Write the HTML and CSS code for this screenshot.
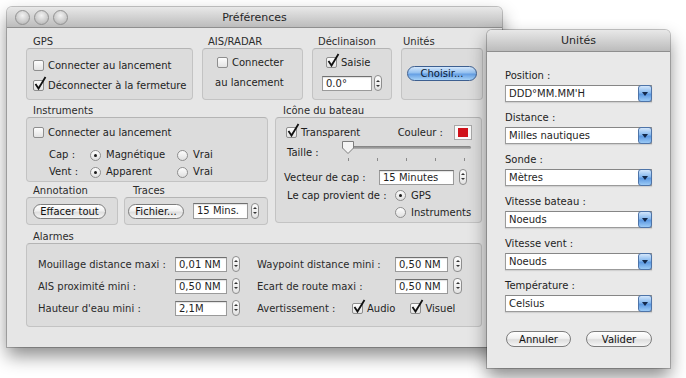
FILE: index.html
```html
<!DOCTYPE html>
<html lang="fr">
<head>
  <meta charset="UTF-8" />
  <title>Préférences</title>
  <link rel="stylesheet" href="styles.css">
</head>
<body>
<div class="desktop">

  <!-- fenêtre principale -->
  <div class="window prefs">
    <div class="titlebar">
      <div class="lights"><span></span><span></span><span></span></div>
      <div class="title">Préférences</div>
    </div>

    <div class="prefs-body">
      <div class="row-top">
        <section>
          <div class="legend">GPS</div>
          <div class="box box-gps">
            <div class="check"><span class="cb"></span>Connecter au lancement</div>
            <div class="check"><span class="cb on"><svg width="14" height="15" viewBox="0 0 14 15"><path d="M2.5 8 L5.5 12.5 L12.5 1" fill="none" stroke="#111" stroke-width="1.8"/></svg></span>Déconnecter à la fermeture</div>
          </div>
        </section>
        <section>
          <div class="legend legend-ais">AIS/RADAR</div>
          <div class="box box-ais">
            <div class="check"><span class="cb"></span>Connecter</div>
            <div class="wrapped">au lancement</div>
          </div>
        </section>
        <section>
          <div class="legend legend-ais">Déclinaison</div>
          <div class="box box-decl">
            <div class="check"><span class="cb on"><svg width="14" height="15" viewBox="0 0 14 15"><path d="M2.5 8 L5.5 12.5 L12.5 1" fill="none" stroke="#111" stroke-width="1.8"/></svg></span>Saisie</div>
            <div class="decl-row">
              <div class="field field-decl">0.0°</div>
              <div class="stepper"></div>
            </div>
          </div>
        </section>
        <section>
          <div class="legend legend-units">Unités</div>
          <div class="box box-units">
            <div class="btn blue btn-choisir">Choisir...</div>
          </div>
        </section>
      </div>

      <div class="row-mid">
        <div class="col-left">
          <section>
            <div class="legend">Instruments</div>
            <div class="box box-inst">
              <div class="check"><span class="cb"></span>Connecter au lancement</div>
              <div class="inst-grid">
                <span>Cap :</span>
                <div class="radio"><span class="rb on"></span>Magnétique</div>
                <div class="radio"><span class="rb"></span>Vrai</div>
                <span>Vent :</span>
                <div class="radio"><span class="rb on"></span>Apparent</div>
                <div class="radio"><span class="rb"></span>Vrai</div>
              </div>
            </div>
          </section>
          <div class="row-small">
            <section>
              <div class="legend">Annotation</div>
              <div class="box box-annot">
                <div class="btn btn-effacer">Effacer tout</div>
              </div>
            </section>
            <section>
              <div class="legend legend-traces">Traces</div>
              <div class="box box-traces">
                <div class="btn btn-fichier">Fichier...</div>
                <div class="field field-traces">15 Mins.</div>
                <div class="stepper"></div>
              </div>
            </section>
          </div>
        </div>

        <section>
          <div class="legend legend-boat">Icône du bateau</div>
          <div class="box box-boat">
            <div class="boat-row boat-first">
              <div class="check"><span class="cb on"><svg width="14" height="15" viewBox="0 0 14 15"><path d="M2.5 8 L5.5 12.5 L12.5 1" fill="none" stroke="#111" stroke-width="1.8"/></svg></span>Transparent</div>
              <div class="colour">Couleur :<span class="swatch"><i></i></span></div>
            </div>
            <div class="boat-row boat-size">
              <span class="size-label">Taille :</span>
              <div class="slider">
                <div class="track"></div>
                <svg class="knob" width="14" height="15" viewBox="0 0 14 15"><path d="M1.5 1.5 H12.5 V8 L7 13.5 L1.5 8 Z" fill="#f4f4f4" stroke="#7d7d7d"/></svg>
                <div class="ticks"><i></i><i></i><i></i><i></i><i></i></div>
              </div>
            </div>
            <div class="boat-row boat-vect">
              <span class="vect-label">Vecteur de cap :</span>
              <div class="field field-vect">15 Minutes</div>
              <div class="stepper"></div>
            </div>
            <div class="boat-row boat-src">
              <span class="src-label">Le cap provient de :</span>
              <div class="radio"><span class="rb on"></span>GPS</div>
            </div>
            <div class="boat-row boat-src2">
              <div class="radio"><span class="rb"></span>Instruments</div>
            </div>
          </div>
        </section>
      </div>

      <section class="alarms">
        <div class="legend">Alarmes</div>
        <div class="box box-alarm">
          <div class="alarm-col">
            <div class="alarm-row"><span class="alabel">Mouillage distance maxi :</span><div class="field field-al">0,01 NM</div><div class="stepper"></div></div>
            <div class="alarm-row"><span class="alabel">AIS proximité mini :</span><div class="field field-al">0,50 NM</div><div class="stepper"></div></div>
            <div class="alarm-row"><span class="alabel">Hauteur d'eau mini :</span><div class="field field-al">2,1M</div><div class="stepper"></div></div>
          </div>
          <div class="alarm-col alarm-right">
            <div class="alarm-row"><span class="alabel">Waypoint distance mini :</span><div class="field field-al">0,50 NM</div><div class="stepper"></div></div>
            <div class="alarm-row"><span class="alabel">Ecart de route maxi :</span><div class="field field-al">0,50 NM</div><div class="stepper"></div></div>
            <div class="alarm-row">
              <span class="alabel warn-label">Avertissement :</span>
              <div class="check"><span class="cb on"><svg width="14" height="15" viewBox="0 0 14 15"><path d="M2.5 8 L5.5 12.5 L12.5 1" fill="none" stroke="#111" stroke-width="1.8"/></svg></span>Audio</div>
              <div class="check check-visuel"><span class="cb on"><svg width="14" height="15" viewBox="0 0 14 15"><path d="M2.5 8 L5.5 12.5 L12.5 1" fill="none" stroke="#111" stroke-width="1.8"/></svg></span>Visuel</div>
            </div>
          </div>
        </div>
      </section>
    </div>
  </div>

  <!-- panneau des unités -->
  <div class="window units">
    <div class="titlebar">
      <div class="title">Unités</div>
    </div>
    <div class="units-body">
      <div class="ufield">
        <div class="ulabel">Position :</div>
        <div class="select"><span>DDD°MM.MM'H</span><i class="arrow"></i></div>
      </div>
      <div class="ufield">
        <div class="ulabel">Distance :</div>
        <div class="select"><span>Milles nautiques</span><i class="arrow"></i></div>
      </div>
      <div class="ufield">
        <div class="ulabel">Sonde :</div>
        <div class="select"><span>Mètres</span><i class="arrow"></i></div>
      </div>
      <div class="ufield">
        <div class="ulabel">Vitesse bateau :</div>
        <div class="select"><span>Noeuds</span><i class="arrow"></i></div>
      </div>
      <div class="ufield">
        <div class="ulabel">Vitesse vent :</div>
        <div class="select"><span>Noeuds</span><i class="arrow"></i></div>
      </div>
      <div class="ufield">
        <div class="ulabel">Température :</div>
        <div class="select"><span>Celsius</span><i class="arrow"></i></div>
      </div>
      <div class="ubuttons">
        <div class="btn btn-annuler">Annuler</div>
        <div class="btn btn-valider">Valider</div>
      </div>
    </div>
  </div>

</div>
</body>
</html>
```

FILE: styles.css
```css
* {
  box-sizing: border-box;
}

body {
  margin: 0;
  background: #fff;
  font-family: "DejaVu Sans", Verdana, sans-serif;
  font-size: 10px;
  color: #1e1e1e;
}

.desktop {
  position: relative;
  width: 686px;
  height: 378px;
  overflow: hidden;
}

/* fenêtres */
.window {
  position: absolute;
  background: #e6e6e6;
  border-radius: 5px 5px 0 0;
  box-shadow: 0 0 0 1px rgba(0,0,0,0.22), 0 9px 18px rgba(0,0,0,0.45);
}

.prefs {
  left: 7px;
  top: 7px;
  width: 495px;
  height: 340px;
}

.units {
  left: 487px;
  top: 30px;
  width: 183px;
  height: 338px;
  background: #e9e9e9;
}

.titlebar {
  position: relative;
  height: 21px;
  display: flex;
  align-items: center;
  justify-content: center;
  background: linear-gradient(#e8e8e8, #d2d2d2 50%, #bcbcbc);
  border-bottom: 1px solid #8f8f8f;
  border-radius: 5px 5px 0 0;
  font-size: 11px;
  color: #262626;
}

.units .titlebar {
  height: 22px;
}

.lights {
  position: absolute;
  left: 8px;
  top: 3px;
  display: flex;
  gap: 4px;
}

.lights span {
  width: 15px;
  height: 15px;
  border-radius: 50%;
  border: 1px solid #929292;
  background: radial-gradient(circle at 50% 35%, #f2f2f2, #cbcbcb 60%, #acacac);
}

.prefs-body {
  padding: 8px 20px 20px 19px;
}

/* groupes */
.legend {
  height: 12px;
  line-height: 12px;
  padding-left: 7px;
  color: #2c2c2c;
}

.legend-ais { padding-left: 6px; }
.legend-units { padding-left: 2px; }
.legend-traces { padding-left: 9px; }
.legend-boat { padding-left: 8px; }

.box {
  background: #dcdcdc;
  border: 1px solid #c3c3c3;
  border-top-color: #b4b4b4;
  border-radius: 4px;
}

.row-top {
  display: grid;
  grid-template-columns: 167px 101px 80px 82px;
  column-gap: 9px;
}

.row-top .box {
  height: 52px;
}

.box-gps {
  padding: 9px 0 0 6px;
  display: flex;
  flex-direction: column;
  gap: 6px;
}

.box-ais {
  padding: 6px 0 0 14px;
}

.wrapped {
  margin: 7px 0 0 -2px;
  height: 14px;
  line-height: 14px;
}

.box-decl {
  padding: 6px 0 0 13px;
}

.decl-row {
  display: flex;
  gap: 2px;
  margin: 7px 0 0 -4px;
}

.field-decl { width: 50px; }

.box-units {
  display: flex;
  align-items: center;
  justify-content: center;
  padding-bottom: 2px;
}

.btn-choisir {
  width: 70px;
  height: 16px;
}

/* contrôles */
.check, .radio {
  display: flex;
  align-items: center;
  gap: 4px;
  height: 14px;
  white-space: nowrap;
}

.radio {
  gap: 5px;
}

.cb {
  position: relative;
  flex: none;
  width: 11px;
  height: 11px;
  border: 1px solid #8e8e8e;
  border-radius: 2px;
  background: linear-gradient(#fdfdfd, #e3e3e3);
}

.cb svg {
  position: absolute;
  left: -1px;
  top: -5px;
}

.rb {
  position: relative;
  flex: none;
  width: 11px;
  height: 11px;
  border: 1px solid #8e8e8e;
  border-radius: 50%;
  background: linear-gradient(#fdfdfd, #e0e0e0);
}

.rb.on::after {
  content: "";
  position: absolute;
  left: 3px;
  top: 3px;
  width: 3px;
  height: 3px;
  border-radius: 50%;
  background: #1a1a1a;
}

.field {
  height: 15px;
  line-height: 13px;
  padding-left: 3px;
  background: #fff;
  border: 1px solid #9a9a9a;
  border-top-color: #707070;
  box-shadow: inset 0 1px 1px rgba(0,0,0,0.12);
  white-space: nowrap;
  overflow: hidden;
}

.stepper {
  flex: none;
  width: 8px;
  height: 16px;
  border: 1px solid #8e8e8e;
  border-radius: 4px;
  background: linear-gradient(#fdfdfd, #e2e2e2);
  display: flex;
  flex-direction: column;
  align-items: center;
  justify-content: center;
  gap: 3px;
  margin-top: -1px;
}

.stepper::before,
.stepper::after {
  content: "";
  width: 0;
  height: 0;
  border-left: 2px solid transparent;
  border-right: 2px solid transparent;
}

.stepper::before { border-bottom: 2px solid #333; }
.stepper::after { border-top: 2px solid #333; }

.btn {
  display: flex;
  align-items: center;
  justify-content: center;
  height: 15px;
  border: 1px solid #7d7d7d;
  border-radius: 8px;
  background: linear-gradient(#ffffff, #f1f1f1 45%, #dedede 55%, #f6f6f6);
  color: #111;
  white-space: nowrap;
}

.btn.blue {
  background: linear-gradient(#d4e7fb, #93c0f0 45%, #659fe4 55%, #a6d2f8);
  border-color: #3d5f90;
  color: #0c1a33;
}

/* rangée du milieu */
.row-mid {
  display: grid;
  grid-template-columns: 242px 207px;
  column-gap: 7px;
  margin-top: 5px;
}

.box-inst {
  height: 65px;
  padding: 7px 0 0 6px;
}

.inst-grid {
  display: grid;
  grid-template-columns: 41px 87px auto;
  row-gap: 3px;
  margin: 9px 0 0 16px;
  line-height: 14px;
}

.row-small {
  display: grid;
  grid-template-columns: 92px 144px;
  column-gap: 6px;
  margin-top: 3px;
}

.box-annot {
  height: 28px;
  display: flex;
  align-items: center;
  padding-left: 6px;
}

.btn-effacer { width: 73px; }

.box-traces {
  height: 28px;
  display: flex;
  align-items: center;
  padding-left: 3px;
}

.btn-fichier { width: 56px; }

.field-traces {
  width: 55px;
  height: 16px;
  margin-left: 9px;
  line-height: 14px;
}

.box-traces .stepper { margin-left: 3px; }

/* icône du bateau */
.box-boat {
  height: 106px;
  padding: 6px 9px 0 10px;
}

.boat-row {
  display: flex;
  align-items: center;
  height: 16px;
}

.boat-first {
  justify-content: space-between;
}

.colour {
  display: flex;
  align-items: center;
  gap: 11px;
}

.swatch {
  width: 18px;
  height: 15px;
  background: #fafafa;
  border: 1px solid #a8a8a8;
  display: flex;
  align-items: center;
  justify-content: center;
}

.swatch i {
  width: 10px;
  height: 9px;
  background: #d0111a;
}

.boat-size {
  margin-top: 4px;
  align-items: flex-start;
}

.size-label {
  width: 56px;
  padding-left: 1px;
  line-height: 16px;
  margin-top: 1px;
}

.slider {
  position: relative;
  width: 129px;
  height: 16px;
}

.track {
  margin-top: 2px;
  height: 3px;
  border-radius: 2px;
  background: linear-gradient(#7d7d7d, #b4b4b4);
}

.knob {
  position: absolute;
  left: -1px;
  top: -4px;
}

.ticks {
  display: flex;
  justify-content: space-between;
  padding: 0 6px;
  margin-top: 9px;
}

.ticks i {
  width: 1px;
  height: 3px;
  background: #8a8a8a;
}

.boat-vect {
  margin-top: 9px;
}

.vect-label {
  width: 95px;
  margin-left: -2px;
}

.field-vect {
  width: 75px;
  height: 15px;
}

.boat-vect .stepper { margin-left: 5px; }

.boat-src {
  margin-top: 3px;
  height: 14px;
}

.src-label {
  width: 108px;
  margin-left: 1px;
}

.boat-src2 {
  margin-top: 3px;
  height: 14px;
  padding-left: 109px;
}

/* alarmes */
.alarms {
  margin-top: 6px;
}

.box-alarm {
  height: 84px;
  display: flex;
  padding: 12px 0 0 11px;
}

.alarm-col {
  width: 219px;
  display: flex;
  flex-direction: column;
  gap: 6px;
}

.alarm-row {
  display: flex;
  align-items: center;
  height: 16px;
}

.alabel {
  width: 137px;
  white-space: nowrap;
  color: #2a2a2a;
}

.alarm-right .alabel { width: 138px; }

.field-al {
  width: 52px;
  height: 15px;
}

.alarm-right .field-al { width: 53px; }

.alarm-row .stepper { margin-left: 5px; }

.alarm-right .stepper { width: 9px; }

.alarm-right .warn-label { width: 95px; }

.alarm-row .check { gap: 4px; }

.check-visuel { margin-left: 15px; }

/* panneau unités */
.units-body {
  padding: 17px 18px 0 18px;
}

.ufield {
  margin-bottom: 9px;
}

.ulabel {
  height: 13px;
  line-height: 13px;
  margin-bottom: 3px;
}

.select {
  display: flex;
  height: 17px;
  background: #fff;
  border: 1px solid #9b9b9b;
  border-top-color: #868686;
  box-shadow: 0 1px 1px rgba(0,0,0,0.1);
}

.select span {
  flex: 1;
  padding-left: 3px;
  line-height: 15px;
  white-space: nowrap;
}

.select .arrow {
  width: 14px;
  margin: -1px -1px -1px 0;
  border: 1px solid #4e74a8;
  border-radius: 3px;
  background: linear-gradient(#d3e6fb, #86b8ee 45%, #5b98e1 55%, #9bcaf6);
  display: flex;
  align-items: center;
  justify-content: center;
}

.select .arrow::after {
  content: "";
  width: 0;
  height: 0;
  border-left: 3px solid transparent;
  border-right: 3px solid transparent;
  border-top: 4px solid #13284a;
}

.ubuttons {
  display: flex;
  justify-content: space-between;
  margin-top: 19px;
  padding-left: 1px;
}

.btn-annuler,
.btn-valider {
  height: 16px;
  width: 65px;
}

.btn-valider { width: 66px; }
```
